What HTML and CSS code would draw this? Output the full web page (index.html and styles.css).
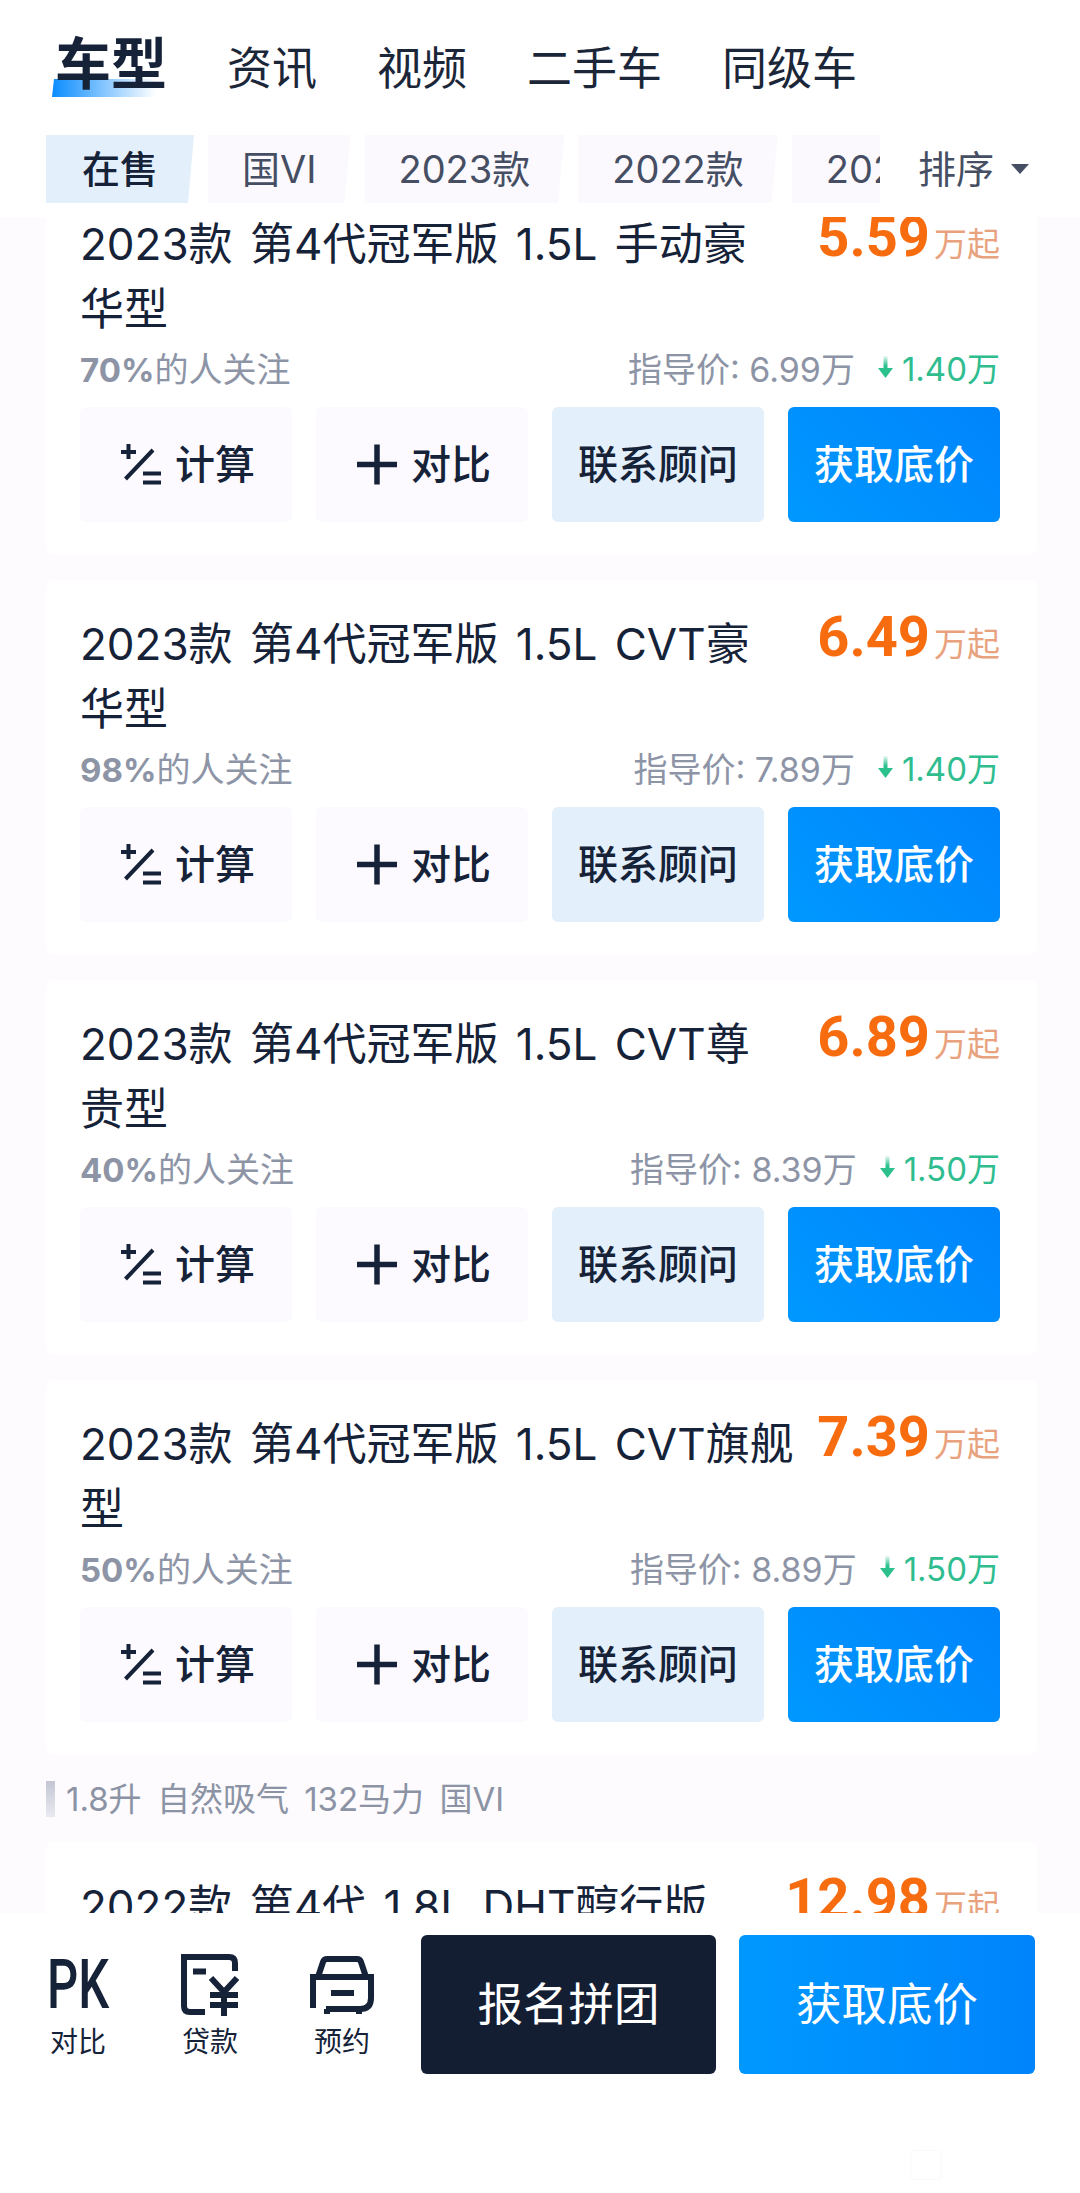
FILE: index.html
```html
<!DOCTYPE html>
<html lang="zh-CN">
<head>
  <meta charset="UTF-8">
  <meta name="viewport" content="width=device-width, initial-scale=1.0">
  <title>车型</title>
  <link rel="stylesheet" href="styles.css">
</head>
<body>
  <svg class="defs" width="0" height="0">
    <defs>
      <linearGradient id="fade" x1="0" y1="0" x2="0" y2="1">
        <stop offset="0" stop-color="#2cc08d" stop-opacity="0.1"/>
        <stop offset="0.7" stop-color="#2cc08d"/>
      </linearGradient>
      <symbol id="calc" viewBox="0 0 40 41">
        <path d="M0 8h15M7.500 0v15M4.500 35L32 6M22 29.500h18M22 38.500h18" fill="none" stroke="#152238" stroke-width="4"/>
      </symbol>
      <symbol id="plus" viewBox="0 0 40 40">
        <path d="M0 20h40M20 0v40" fill="none" stroke="#152238" stroke-width="5.500"/>
      </symbol>
      <symbol id="down" viewBox="0 0 17 22">
        <rect x="6.500" y="0" width="4" height="14" fill="url(#fade)"/>
        <path d="M1 12h15L8.500 22z" fill="#2cc08d"/>
      </symbol>
    </defs>
  </svg>

  <header class="top">
    <nav class="tabs">
      <a class="tab tab-on">车型</a>
      <a class="tab">资讯</a>
      <a class="tab">视频</a>
      <a class="tab">二手车</a>
      <a class="tab">同级车</a>
    </nav>
    <div class="filters">
      <div class="chips">
        <span class="chip chip-on">在售</span>
        <span class="chip">国VI</span>
        <span class="chip">2023款</span>
        <span class="chip">2022款</span>
        <span class="chip">2021款</span>
      </div>
      <div class="sort">排序<i class="caret"></i></div>
    </div>
  </header>

  <main class="scroller">
    <div class="list">
      <section class="card">
        <div class="head">
          <h3 class="name">2023款 第4代冠军版 1.5L 手动豪<br>华型</h3>
          <div class="price"><b>5.59</b><span>万起</span></div>
        </div>
        <div class="meta">
          <div class="hot"><b>70%</b>的人关注</div>
          <div class="guide">指导价: 6.99万<span class="drop"><svg class="arrow"><use href="#down"/></svg>1.40万</span></div>
        </div>
        <div class="btns">
          <a class="btn btn-plain"><svg class="ico"><use href="#calc"/></svg>计算</a>
          <a class="btn btn-plain"><svg class="ico"><use href="#plus"/></svg>对比</a>
          <a class="btn btn-soft">联系顾问</a>
          <a class="btn btn-blue">获取底价</a>
        </div>
      </section>

      <section class="card">
        <div class="head">
          <h3 class="name">2023款 第4代冠军版 1.5L CVT豪<br>华型</h3>
          <div class="price"><b>6.49</b><span>万起</span></div>
        </div>
        <div class="meta">
          <div class="hot"><b>98%</b>的人关注</div>
          <div class="guide">指导价: 7.89万<span class="drop"><svg class="arrow"><use href="#down"/></svg>1.40万</span></div>
        </div>
        <div class="btns">
          <a class="btn btn-plain"><svg class="ico"><use href="#calc"/></svg>计算</a>
          <a class="btn btn-plain"><svg class="ico"><use href="#plus"/></svg>对比</a>
          <a class="btn btn-soft">联系顾问</a>
          <a class="btn btn-blue">获取底价</a>
        </div>
      </section>

      <section class="card">
        <div class="head">
          <h3 class="name">2023款 第4代冠军版 1.5L CVT尊<br>贵型</h3>
          <div class="price"><b>6.89</b><span>万起</span></div>
        </div>
        <div class="meta">
          <div class="hot"><b>40%</b>的人关注</div>
          <div class="guide">指导价: 8.39万<span class="drop"><svg class="arrow"><use href="#down"/></svg>1.50万</span></div>
        </div>
        <div class="btns">
          <a class="btn btn-plain"><svg class="ico"><use href="#calc"/></svg>计算</a>
          <a class="btn btn-plain"><svg class="ico"><use href="#plus"/></svg>对比</a>
          <a class="btn btn-soft">联系顾问</a>
          <a class="btn btn-blue">获取底价</a>
        </div>
      </section>

      <section class="card">
        <div class="head">
          <h3 class="name">2023款 第4代冠军版 1.5L CVT旗舰<br>型</h3>
          <div class="price"><b>7.39</b><span>万起</span></div>
        </div>
        <div class="meta">
          <div class="hot"><b>50%</b>的人关注</div>
          <div class="guide">指导价: 8.89万<span class="drop"><svg class="arrow"><use href="#down"/></svg>1.50万</span></div>
        </div>
        <div class="btns">
          <a class="btn btn-plain"><svg class="ico"><use href="#calc"/></svg>计算</a>
          <a class="btn btn-plain"><svg class="ico"><use href="#plus"/></svg>对比</a>
          <a class="btn btn-soft">联系顾问</a>
          <a class="btn btn-blue">获取底价</a>
        </div>
      </section>

      <div class="group">1.8升 自然吸气 132马力 国VI</div>

      <section class="card">
        <div class="head">
          <h3 class="name">2022款 第4代 1.8L DHT醇行版</h3>
          <div class="price"><b>12.98</b><span>万起</span></div>
        </div>
      </section>
    </div>
  </main>

  <footer class="bar">
    <a class="act">
      <span class="act-ico"><span class="pk">PK</span></span>
      <span class="act-txt">对比</span>
    </a>
    <a class="act">
      <span class="act-ico">
        <svg width="58" height="62" viewBox="0 0 58 62" fill="none" stroke="#152238" stroke-width="6">
          <path d="M54 17V9Q54 3 48 3H3V52Q3 58 9 58H24"/>
          <path d="M12 17.500H25"/>
          <path d="M30 24L43 38L56 24M29 41H57M29 51H57M43 37V62"/>
        </svg>
      </span>
      <span class="act-txt">贷款</span>
    </a>
    <a class="act">
      <span class="act-ico">
        <svg width="64" height="58" viewBox="0 0 64 58" fill="none" stroke="#152238" stroke-width="6">
          <path d="M8 21L13 6Q14 3 17 3H47Q50 3 51 6L56 21"/>
          <path d="M0 21H64"/>
          <path d="M3 21V52M61 21V42Q61 53 50 53H16"/>
          <path d="M17 53V58M49 53V58"/>
          <path d="M21 37H44"/>
        </svg>
      </span>
      <span class="act-txt">预约</span>
    </a>
    <a class="cta cta-dark">报名拼团</a>
    <a class="cta cta-blue">获取底价</a>
    <i class="mark"></i>
  </footer>
</body>
</html>
```

FILE: styles.css
```css
* {
  box-sizing: border-box;
}
body {
  margin: 0;
  width: 1080px;
  height: 2193px;
  overflow: hidden;
  display: flex;
  flex-direction: column;
  background-color: #fff;
  color: #152238;
  font-family: Inter, "Noto Sans CJK SC", sans-serif;
}
.defs {
  position: absolute;
}

/* top */
.top {
  height: 217px;
  flex-shrink: 0;
  padding-top: 32px;
  background-color: #fff;
}
.tabs {
  display: flex;
  align-items: flex-end;
  gap: 60px;
  height: 64px;
  padding-left: 55px;
}
.tab {
  font-size: 45px;
  line-height: 54px;
  color: #1b2639;
}
.tab-on {
  position: relative;
  z-index: 0;
  font-size: 56px;
  line-height: 64px;
  font-weight: 700;
  color: #152238;
}
.tab-on::after {
  content: "";
  position: absolute;
  z-index: -1;
  left: -3px;
  top: 47px;
  width: 104px;
  height: 18px;
  background: linear-gradient(90deg, #0a8cff, rgba(10, 140, 255, 0));
  clip-path: polygon(2px 0, 100% 0, 100% 100%, 0 100%);
}
.filters {
  display: flex;
  height: 68px;
  margin-top: 39px;
  padding-left: 46px;
}
.chips {
  display: flex;
  gap: 14px;
  width: 834px;
  overflow: hidden;
}
.chip {
  flex-shrink: 0;
  padding: 0 34px;
  font-size: 38px;
  line-height: 68px;
  color: #454e63;
  background-color: #fbf9fd;
  clip-path: polygon(0 0, 100% 0, calc(100% - 6px) 100%, 0 100%);
}
.chip-on {
  padding: 0 36px;
  color: #152238;
  font-weight: 500;
  background-color: #e3f0fc;
}
.sort {
  display: flex;
  align-items: center;
  padding: 0 0 6px 38px;
  font-size: 38px;
  color: #454e63;
}
.caret {
  margin: 6px 0 0 17px;
  border-left: 9px solid transparent;
  border-right: 9px solid transparent;
  border-top: 10px solid #454e63;
}

/* list */
.scroller {
  flex: 1;
  min-height: 0;
  overflow: hidden;
  background-color: #fdfbfe;
}
.list {
  margin-top: -37px;
  padding: 0 43px 0 46px;
}
.card {
  height: 375px;
  margin-bottom: 25px;
  padding: 32px 37px 33px 34px;
  background-color: #fff;
  border-radius: 8px;
}
.head {
  display: flex;
  justify-content: space-between;
}
.name {
  flex: 1;
  min-width: 0;
  margin: 0;
  font-size: 44px;
  font-weight: 400;
  line-height: 65px;
  word-spacing: 5px;
  white-space: nowrap;
  color: #152238;
}
.price {
  flex-shrink: 0;
  display: flex;
  align-items: baseline;
  height: 65px;
  line-height: 50px;
  color: #e9a27e;
  font-size: 33px;
}
.price b {
  margin-right: 4px;
  font-family: Roboto, sans-serif;
  font-size: 56px;
  font-weight: 700;
  color: #f86c10;
}
.meta {
  display: flex;
  justify-content: space-between;
  align-items: center;
  height: 44px;
  margin-top: 3px;
  font-size: 33px;
  color: #8d94a6;
}
.hot {
  font-size: 34px;
}
.hot b {
  font-size: 33px;
  font-weight: 700;
}
.guide {
  display: flex;
  align-items: center;
  font-size: 34px;
}
.drop {
  display: flex;
  align-items: center;
  margin-left: 22px;
  font-size: 33px;
  color: #2fbd90;
}
.arrow {
  width: 17px;
  height: 22px;
  margin-right: 8px;
}
.btns {
  display: grid;
  grid-template-columns: repeat(4, 212px);
  gap: 24px;
  margin-top: 18px;
}
.btn {
  display: flex;
  align-items: center;
  justify-content: center;
  height: 115px;
  padding-bottom: 6px;
  border-radius: 6px;
  font-size: 40px;
  font-weight: 500;
}
.btn-plain {
  gap: 14px;
  padding-left: 4px;
  background-color: #fcfafe;
}
.btn-soft {
  background-color: #e3f0fc;
}
.btn-blue {
  color: #fff;
  background: linear-gradient(45deg, #0098ff, #0084fb);
}
.ico {
  width: 40px;
  height: 41px;
  margin-top: 6px;
}

.group {
  position: relative;
  height: 36px;
  margin: 26px 0 25px;
  padding-left: 20px;
  font-size: 33px;
  line-height: 36px;
  word-spacing: 6px;
  color: #8b93a5;
}
.group::before {
  content: "";
  position: absolute;
  left: 0;
  top: 0;
  width: 9px;
  height: 36px;
  background: linear-gradient(#c3c6d3, #e9eaf1);
}

/* bottom */
.bar {
  position: relative;
  height: 280px;
  flex-shrink: 0;
  display: flex;
  align-items: flex-start;
  padding: 22px 0 0 46px;
  background-color: #fff;
}
.act {
  display: flex;
  flex-direction: column;
  align-items: center;
  width: 64px;
  margin-right: 68px;
}
.act-ico {
  display: flex;
  align-items: center;
  justify-content: center;
  height: 62px;
  margin-top: 19px;
}
.act-txt {
  margin-top: 8px;
  font-size: 28px;
  line-height: 36px;
  white-space: nowrap;
}
.pk {
  font-family: Roboto, sans-serif;
  font-size: 68px;
  font-weight: 500;
  line-height: 62px;
  transform: scaleX(0.72);
}
.cta {
  display: flex;
  align-items: center;
  justify-content: center;
  height: 139px;
  padding-bottom: 8px;
  border-radius: 6px;
  font-size: 45.5px;
  color: #fff;
}
.cta-dark {
  width: 295px;
  margin-left: -21px;
  background-color: #141e33;
}
.cta-blue {
  width: 296px;
  margin-left: 23px;
  background: linear-gradient(90deg, #0098ff, #0084fb);
}
.mark {
  position: absolute;
  left: 910px;
  top: 237px;
  width: 32px;
  height: 30px;
  border: 1px solid #fafafb;
  border-radius: 4px;
}
```
